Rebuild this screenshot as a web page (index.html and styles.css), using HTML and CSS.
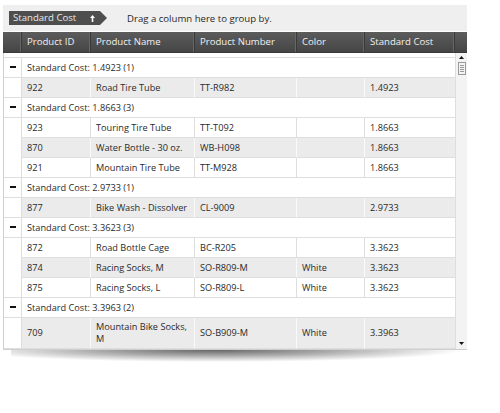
FILE: index.html
```html
<!DOCTYPE html>
<html>
<head>
<meta charset="utf-8">
<link rel="stylesheet" href="styles.css">
</head>
<body>
<div class="grid">
  <div class="group-panel">
    <div class="chip"><span>Standard Cost</span>
      <svg class="sort" width="5" height="7" viewBox="0 0 5 7"><path d="M2.5 0 L5 3 L3.3 3 L3.3 7 L1.7 7 L1.7 3 L0 3 Z" fill="#fff"/></svg>
    </div>
    <span class="hint">Drag a column here to group by.</span>
  </div>
  <div class="header">
    <div class="hcell"></div>
    <div class="hcell">Product ID</div>
    <div class="hcell">Product Name</div>
    <div class="hcell">Product Number</div>
    <div class="hcell">Color</div>
    <div class="hcell">Standard Cost</div>
    <div class="hcell last"></div>
  </div>
  <div class="body">
    <div class="rows">
      <div class="spacer"></div>

      <div class="grow"><div class="ind"><i class="minus"></i></div><div class="gtext">Standard Cost: 1.4923 (1)</div></div>
      <div class="row alt end"><div class="ind"></div><div class="c">922</div><div class="c">Road Tire Tube</div><div class="c">TT-R982</div><div class="c"></div><div class="c">1.4923</div></div>

      <div class="grow"><div class="ind"><i class="minus"></i></div><div class="gtext">Standard Cost: 1.8663 (3)</div></div>
      <div class="row"><div class="ind"></div><div class="c">923</div><div class="c">Touring Tire Tube</div><div class="c">TT-T092</div><div class="c"></div><div class="c">1.8663</div></div>
      <div class="row alt"><div class="ind"></div><div class="c">870</div><div class="c">Water Bottle - 30 oz.</div><div class="c">WB-H098</div><div class="c"></div><div class="c">1.8663</div></div>
      <div class="row end"><div class="ind"></div><div class="c">921</div><div class="c">Mountain Tire Tube</div><div class="c">TT-M928</div><div class="c"></div><div class="c">1.8663</div></div>

      <div class="grow"><div class="ind"><i class="minus"></i></div><div class="gtext">Standard Cost: 2.9733 (1)</div></div>
      <div class="row alt end"><div class="ind"></div><div class="c">877</div><div class="c">Bike Wash - Dissolver</div><div class="c">CL-9009</div><div class="c"></div><div class="c">2.9733</div></div>

      <div class="grow"><div class="ind"><i class="minus"></i></div><div class="gtext">Standard Cost: 3.3623 (3)</div></div>
      <div class="row"><div class="ind"></div><div class="c">872</div><div class="c">Road Bottle Cage</div><div class="c">BC-R205</div><div class="c"></div><div class="c">3.3623</div></div>
      <div class="row alt"><div class="ind"></div><div class="c">874</div><div class="c">Racing Socks, M</div><div class="c">SO-R809-M</div><div class="c">White</div><div class="c">3.3623</div></div>
      <div class="row end"><div class="ind"></div><div class="c">875</div><div class="c">Racing Socks, L</div><div class="c">SO-R809-L</div><div class="c">White</div><div class="c">3.3623</div></div>

      <div class="grow"><div class="ind"><i class="minus"></i></div><div class="gtext">Standard Cost: 3.3963 (2)</div></div>
      <div class="row alt tall end"><div class="ind"></div><div class="c">709</div><div class="c">Mountain Bike Socks, M</div><div class="c">SO-B909-M</div><div class="c">White</div><div class="c">3.3963</div></div>
    </div>
    <div class="scrollbar">
      <svg class="sarrow" width="5" height="3" viewBox="0 0 5 3"><path d="M2.5 0 L5 3 L0 3 Z" fill="#111"/></svg>
      <div class="thumb"><i></i><i></i><i></i><i></i></div>
      <div class="track"></div>
      <svg class="sarrow" width="5" height="3" viewBox="0 0 5 3"><path d="M0 0 L5 0 L2.5 3 Z" fill="#111"/></svg>
    </div>
  </div>
  <div class="shadow"></div>
</div>
</body>
</html>
```
FILE: styles.css
```css
html, body {
  margin: 0;
  padding: 0;
  background: #fff;
}
body {
  font-family: "Open Sans", "Noto Sans", sans-serif;
  font-size: 9.2px;
  color: #2a2a2a;
}
.grid {
  width: 464px;
  margin: 5px 0 0 3px;
}
.group-panel {
  height: 26px;
  background: #efefef;
  display: flex;
  align-items: center;
  margin-bottom: 1px;
}
.chip {
  margin-left: 6px;
  width: 98px;
  height: 14px;
  box-sizing: border-box;
  background: #4e4e4e;
  color: #e8e8e8;
  display: flex;
  align-items: center;
  padding-left: 4px;
  font-size: 9.6px;
  clip-path: polygon(0 0, 91px 0, 98px 50%, 91px 100%, 0 100%);
}
.chip span {
  flex: 1;
  line-height: 14px;
}
.chip .sort {
  margin-right: 12px;
}
.hint {
  margin-left: 20px;
  color: #2a2a2a;
  font-size: 9.6px;
}
.header {
  display: grid;
  grid-template-columns: 19px 69px 104px 102px 68px 90px 12px;
  height: 21px;
  background: linear-gradient(#5c5c5c, #454545);
  border-bottom: 1px solid #3a3a3a;
  box-sizing: border-box;
  font-size: 9.6px;
}
.hcell {
  color: #f0f0f0;
  line-height: 20px;
  padding-left: 5px;
  border-right: 1px solid #3a3a3a;
  box-shadow: inset -1px 0 0 #666;
  white-space: nowrap;
  overflow: hidden;
}
.hcell:first-child {
  padding-left: 0;
}
.hcell.last {
  border-right: none;
  box-shadow: none;
}
.body {
  display: flex;
  height: 297px;
  border-left: 1px solid #cfcfcf;
  border-bottom: 1px solid #cfcfcf;
  box-sizing: border-box;
  background: #fff;
}
.shadow {
  height: 12px;
  margin: 0 4px 0 8px;
  background: radial-gradient(ellipse 55% 100% at 45% 0%, rgba(0, 0, 0, 0.6) 0%, rgba(0, 0, 0, 0.35) 45%, rgba(0, 0, 0, 0) 100%);
}
.rows {
  width: 451px;
  display: flex;
  flex-direction: column;
}
.spacer {
  height: 5px;
  border-bottom: 1px solid #dedede;
  box-sizing: border-box;
}
.grow, .row {
  display: grid;
  grid-template-columns: 18px 69px 104px 102px 68px 90px;
  height: 20px;
}
.grow .ind {
  border-right: 1px solid #dedede;
  border-bottom: 1px solid #dedede;
  display: flex;
  align-items: center;
  justify-content: center;
}
.minus {
  display: block;
  width: 6px;
  height: 2px;
  background: #111;
}
.gtext {
  grid-column: 2 / 7;
  border-bottom: 1px solid #dedede;
  line-height: 19px;
  padding-left: 5px;
  white-space: nowrap;
}
.row .ind {
  border-right: 1px solid #dedede;
}
.row.end .ind {
  border-bottom: 1px solid #dedede;
}
.row .c {
  border-right: 1px solid #dedede;
  border-bottom: 1px solid #dedede;
  padding-left: 5px;
  line-height: 19px;
  white-space: nowrap;
  overflow: hidden;
}
.row .c:last-child {
  border-right: none;
}
.row.alt .c {
  background: #ebebeb;
  border-right-color: #f9f9f9;
}
.row.tall {
  height: 32px;
}
.row.tall .c {
  display: flex;
  align-items: center;
  line-height: 12px;
  white-space: normal;
  padding-right: 2px;
}
.row.tall .c:last-child {
  border-right: none;
}
.scrollbar {
  width: 12px;
  background: #f3f3f3;
  border-left: 1px solid #dedede;
  box-sizing: border-box;
  display: flex;
  flex-direction: column;
  align-items: center;
  padding: 3px 0 4px;
}
.sarrow {
  display: block;
  flex: none;
}
.thumb {
  margin-top: 3px;
  width: 8px;
  height: 13px;
  box-sizing: border-box;
  border: 1px solid #9a9a9a;
  background: #f4f4f4;
  display: flex;
  flex-direction: column;
  justify-content: center;
  align-items: center;
  gap: 1px;
}
.thumb i {
  display: block;
  width: 4px;
  height: 1px;
  background: #999;
}
.track {
  flex: 1;
}
```
